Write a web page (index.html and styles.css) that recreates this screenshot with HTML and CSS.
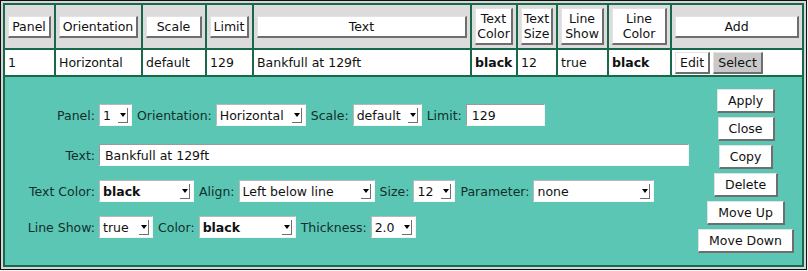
FILE: index.html
```html
<!DOCTYPE html>
<html>
<head>
    <title>Marker Lines</title>
    <link rel="stylesheet" href="styles.css">
</head>
<body>
<div class="frame">
  <table class="markers">
    <tr class="head">
      <th class="c-panel"><button>Panel</button></th>
      <th class="c-orient"><button>Orientation</button></th>
      <th class="c-scale"><button>Scale</button></th>
      <th class="c-limit"><button>Limit</button></th>
      <th class="c-text"><button>Text</button></th>
      <th class="c-tcolor"><button>Text<br>Color</button></th>
      <th class="c-tsize"><button>Text<br>Size</button></th>
      <th class="c-lshow"><button>Line<br>Show</button></th>
      <th class="c-lcolor"><button>Line<br>Color</button></th>
      <th class="c-add"><button>Add</button></th>
    </tr>
    <tr class="row">
      <td>1</td>
      <td>Horizontal</td>
      <td>default</td>
      <td>129</td>
      <td>Bankfull at 129ft</td>
      <td class="strong">black</td>
      <td>12</td>
      <td>true</td>
      <td class="strong">black</td>
      <td class="actions"><button class="small">Edit</button><button class="small picked">Select</button></td>
    </tr>
    <tr>
      <td colspan="10" class="editor">
        <div class="editor-body">
          <div class="fields">
            <label class="lbl first">Panel:</label>
            <div class="line first">
              <span class="combo w-panel"><select><option>1</option></select><span class="arrow"></span></span>
              <label>Orientation:</label>
              <span class="combo w-orient"><select><option>Horizontal</option></select><span class="arrow"></span></span>
              <label>Scale:</label>
              <span class="combo w-scale"><select><option>default</option></select><span class="arrow"></span></span>
              <label>Limit:</label>
              <input type="text" class="w-limit" value="129">
            </div>

            <label class="lbl">Text:</label>
            <div class="line">
              <input type="text" class="w-text" value="Bankfull at 129ft">
            </div>

            <label class="lbl">Text Color:</label>
            <div class="line">
              <span class="combo w-tcolor bold"><select><option>black</option></select><span class="arrow"></span></span>
              <label>Align:</label>
              <span class="combo w-align"><select><option>Left below line</option></select><span class="arrow"></span></span>
              <label>Size:</label>
              <span class="combo w-size"><select><option>12</option></select><span class="arrow"></span></span>
              <label>Parameter:</label>
              <span class="combo w-param"><select><option>none</option></select><span class="arrow"></span></span>
            </div>

            <label class="lbl">Line Show:</label>
            <div class="line">
              <span class="combo w-show"><select><option>true</option></select><span class="arrow"></span></span>
              <label>Color:</label>
              <span class="combo w-color bold"><select><option>black</option></select><span class="arrow"></span></span>
              <label>Thickness:</label>
              <span class="combo w-thick"><select><option>2.0</option></select><span class="arrow"></span></span>
            </div>
          </div>

          <div class="commands">
            <button>Apply</button>
            <button>Close</button>
            <button>Copy</button>
            <button>Delete</button>
            <button>Move Up</button>
            <button>Move Down</button>
          </div>
        </div>
      </td>
    </tr>
  </table>
</div>
</body>
</html>
```

FILE: styles.css
```css
body {
    margin: 0;
    background-color: #f2f2f2;
    font-family: "DejaVu Sans", sans-serif;
    font-size: 12.5px;
    color: #111;
}

.frame {
    display: inline-block;
    border: 1px solid #111;
    padding: 2px;
    background-color: #d6d6d6;
}

.markers {
    width: 801px;
    table-layout: fixed;
    border-spacing: 2px;
    background-color: #17694a;
}

.markers th,
.markers td {
    box-sizing: border-box;
    padding: 0 3px;
    font-weight: normal;
    text-align: left;
    white-space: nowrap;
}

button {
    font-family: "DejaVu Sans", sans-serif;
    font-size: 12.5px;
    color: #111;
    background-color: #fff;
    border-style: solid;
    border-width: 1px 2px 2px 1px;
    border-color: #e2e2e2 #6e6e6e #6e6e6e #e2e2e2;
    padding: 3px 10px;
    line-height: 15px;
    cursor: pointer;
}

/* header row */
.head th {
    height: 43px;
    padding: 3px;
    background-color: #dcdcdc;
}

.head button {
    display: block;
    width: 100%;
    padding: 2px 0;
}

.c-panel  { width: 49px; }
.c-orient { width: 85px; }
.c-scale  { width: 62px; }
.c-limit  { width: 45px; }
.c-text   { width: 216px; }
.c-tcolor { width: 44px; }
.c-tsize  { width: 38px; }
.c-lshow  { width: 49px; }
.c-lcolor { width: 61px; }
.c-add    { width: 130px; }

/* data row */
.row td {
    height: 25px;
    background-color: #fff;
}

.row .strong {
    font-weight: bold;
}

.actions {
    display: flex;
    align-items: center;
    gap: 3px;
    padding-top: 2px;
}

.small {
    height: 22px;
    padding: 0 4px;
}

.small.picked {
    background-color: #c9c9c9;
}

/* editor panel */
.markers td.editor {
    padding: 0;
    background-color: #5cc6b4;
}

.editor-body {
    height: 188px;
    display: flex;
    align-items: center;
}

.fields {
    display: grid;
    grid-template-columns: 71px auto;
    column-gap: 4px;
    row-gap: 14px;
    align-items: center;
    padding-left: 19px;
    color: #10302c;
}

.fields .first {
    margin-bottom: 4px;
}

.lbl {
    text-align: right;
}

.line {
    display: flex;
    align-items: center;
    gap: 4px;
    height: 22px;
}

.line label {
    margin-left: 1px;
}

.combo {
    box-sizing: border-box;
    display: inline-flex;
    align-items: center;
    height: 22px;
    background-color: #fff;
    border: 1px solid;
    border-color: #b8b8b8 #f4f4f4 #f4f4f4 #b8b8b8;
    padding-left: 3px;
}

.combo select {
    appearance: none;
    -webkit-appearance: none;
    flex: 1;
    min-width: 0;
    border: none;
    background: transparent;
    font-family: "DejaVu Sans", sans-serif;
    font-size: 12.5px;
    color: #111;
    padding: 0;
    outline: none;
}

.combo.bold select {
    font-weight: bold;
}

.arrow {
    position: relative;
    width: 9px;
    height: 14px;
    margin-right: 3px;
    border-right: 1px solid #6e6e6e;
    border-bottom: 1px solid #6e6e6e;
}

.arrow::before {
    content: "";
    position: absolute;
    left: 2px;
    top: 5px;
    border-left: 3px solid transparent;
    border-right: 3px solid transparent;
    border-top: 4px solid #000;
}

input[type="text"] {
    box-sizing: border-box;
    height: 22px;
    border: 1px solid;
    border-color: #9a9a9a #f4f4f4 #f4f4f4 #9a9a9a;
    padding: 0 5px;
    font-family: "DejaVu Sans", sans-serif;
    font-size: 12.5px;
    color: #111;
}

.w-panel  { width: 33px; }
.w-orient { width: 90px; }
.w-scale  { width: 69px; }
.w-limit  { width: 79px; }
.w-text   { width: 590px; }
.w-tcolor { width: 95px; }
.w-align  { width: 136px; }
.w-size   { width: 42px; }
.w-param  { width: 121px; }
.w-show   { width: 54px; }
.w-color  { width: 97px; }
.w-thick  { width: 45px; }

.commands {
    margin-left: auto;
    padding-right: 8px;
    display: flex;
    flex-direction: column;
    align-items: center;
    gap: 4px;
}

.commands button {
    height: 24px;
}
```
